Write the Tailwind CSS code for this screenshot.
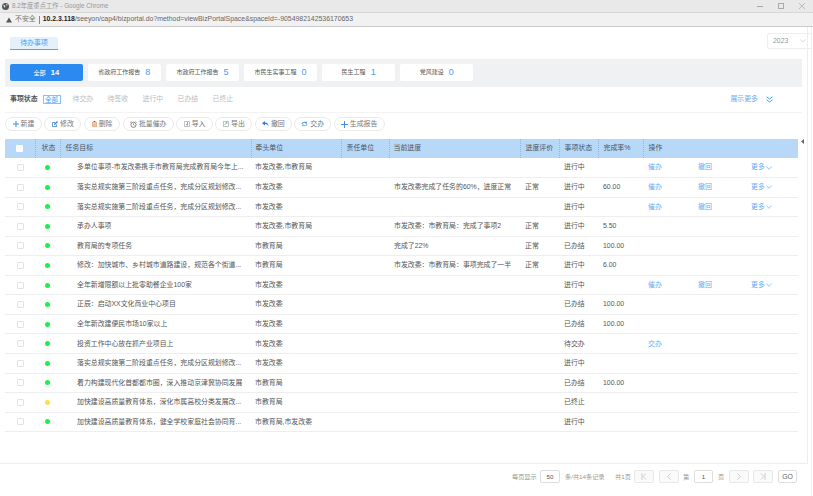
<!DOCTYPE html>
<html lang="zh-CN">

<head>
    <meta charset="UTF-8">
    <meta name="viewport" content="width=device-width, initial-scale=1.0">
    <script src="https://cdn.jsdelivr.net/npm/@tailwindcss/browser@4"></script>
    <title>8.2年度重点工作</title>
</head>

<body class="bg-white overflow-hidden font-['Liberation_Sans','Noto_Sans_CJK_SC',sans-serif]">
    <div class="relative w-[813px] h-[496px] overflow-hidden flex flex-col text-[#555]">
        <!-- Chrome title bar -->
        <div class="h-[13px] bg-[#e9e9ea] flex items-center border-b border-[#d8d8d8]">
            <svg class="ml-[2px] w-[7px] h-[7px]" viewBox="0 0 12 12"><circle cx="6" cy="6" r="6" fill="#555"/><path d="M2 3l3 1 1 2-2 2zM7 1l3 2-2 2z" fill="#ddd"/></svg>
            <span class="ml-[3px] text-[6.3px] text-[#999]">8.2年度重点工作 - Google Chrome</span>
            <div class="ml-auto flex items-center gap-[15px] pr-[8px]">
                <span class="w-[6px] h-px bg-[#aaa]"></span>
                <span class="w-[6px] h-[6px] border border-[#aaa]"></span>
                <svg class="w-[6px] h-[6px]" viewBox="0 0 6 6"><path d="M0 0l6 6M6 0L0 6" stroke="#aaa" stroke-width=".7"/></svg>
            </div>
        </div>
        <!-- Address bar -->
        <div class="h-[14px] bg-[#f1f1f2] flex items-center border-b border-[#c9c9c9] text-[6.9px] whitespace-nowrap">
            <svg class="ml-[6px] w-[6px] h-[6px]" viewBox="0 0 6 6"><path d="M3 .5L6 5.5H0z" fill="#555"/></svg>
            <span class="ml-[3px] text-[#777]">不安全</span>
            <span class="ml-[3px] w-px h-[8px] bg-[#888]"></span>
            <span class="ml-[3px] text-[#222] font-bold">10.2.3.118</span><span class="text-[#666]">/seeyon/cap4/bizportal.do?method=viewBizPortalSpace&amp;spaceId=-9054982142536170653</span>
        </div>

        <!-- Main panel -->
        <div class="w-[808px] h-[437px] border-r border-b border-[#eeeeee]">
            <div class="h-[32px] pt-[6px] flex items-start justify-between">
                <div class="ml-[10px] mt-[4px] w-[48px] h-[13px] bg-[#e3f1fd] border-b border-[#5aa5f2] rounded-t-[2px] text-[6.9px] text-[#4a9cf5] text-center leading-[12px]">待办事项</div>
                <div class="w-[45px] h-[16px] -mr-[5px] border border-[#eeeeee] rounded-[2px] flex items-center justify-between px-[5px] text-[6.9px] text-[#999]">2023
                    <svg class="w-[6px] h-[4px]" viewBox="0 0 6 4"><path d="M.5.5L3 3 5.5.5" fill="none" stroke="#ccc" stroke-width=".7"/></svg>
                </div>
            </div>

            <!-- Category cards -->
            <div class="mx-[5px] h-[28px] bg-[#f0f1f3] flex gap-[5.6px] pl-[5px] pt-[5px]">
                <div class="w-[72.5px] h-[17px] rounded-[2px] bg-[#2a8af0] text-white flex items-center justify-center gap-[5px] text-[6.2px]">全部 <span class="text-[7.5px] font-bold">14</span></div>
                <div class="w-[72.5px] h-[17px] rounded-[2px] bg-white flex items-center justify-center gap-[5px] text-[6px] text-[#555]">省政府工作报告 <span class="text-[9px] text-[#4a9cf5]">8</span></div>
                <div class="w-[72.5px] h-[17px] rounded-[2px] bg-white flex items-center justify-center gap-[5px] text-[6px] text-[#555]">市政府工作报告 <span class="text-[9px] text-[#4a9cf5]">5</span></div>
                <div class="w-[72.5px] h-[17px] rounded-[2px] bg-white flex items-center justify-center gap-[5px] text-[6px] text-[#555]">市民生实事工程 <span class="text-[9px] text-[#4a9cf5]">0</span></div>
                <div class="w-[72.5px] h-[17px] rounded-[2px] bg-white flex items-center justify-center gap-[5px] text-[6px] text-[#555]">民生工程 <span class="text-[9px] text-[#4a9cf5]">1</span></div>
                <div class="w-[72.5px] h-[17px] rounded-[2px] bg-white flex items-center justify-center gap-[5px] text-[6px] text-[#555]">党风建设 <span class="text-[9px] text-[#4a9cf5]">0</span></div>
            </div>

            <!-- Status filter -->
            <div class="mx-[5px] h-[26px] pb-[1px] border-b border-[#f3f3f3] flex items-center text-[6.9px] text-[#bbb]">
                <span class="ml-[5px] font-bold text-[#555]">事项状态</span>
                <span class="ml-[5px] w-[18px] h-[9px] border border-[#8cc0f5] text-[#4a9cf5] text-[6.5px] leading-[7px] text-center">全部</span>
                <span class="ml-[12px] w-[35px]">待交办</span>
                <span class="w-[35px]">待签收</span>
                <span class="w-[35px]">进行中</span>
                <span class="w-[35px]">已办结</span>
                <span>已终止</span>
                <span class="ml-auto text-[#6aabf5]">展示更多</span>
                <svg class="ml-[8px] mr-[29px] w-[7px] h-[7px]" viewBox="0 0 7 7"><path d="M.5.8L3.5 3 6.5.8M.5 3.8L3.5 6l3-2.2" fill="none" stroke="#4a9cf5" stroke-width="1"/></svg>
            </div>

            <!-- Toolbar -->
            <div class="ml-[5px] mt-[4px] flex gap-[2.4px] text-[6.9px] text-[#777]">
                <button class="w-[37px] h-[14px] rounded-full border border-[#eaeaea] flex items-center justify-center gap-[2px]"><svg class="w-[6px] h-[6px]" viewBox="0 0 6 6"><path d="M3 0v6M0 3h6" stroke="#3f8fe6"/></svg>新建</button>
                <button class="w-[37px] h-[14px] rounded-full border border-[#eaeaea] flex items-center justify-center gap-[2px]"><svg class="w-[6px] h-[6px]" viewBox="0 0 6 6"><path d="M0 1h3v1H1v3h3V3.500h1V6H0z" fill="#6f9fe0"/><path d="M2 4l.2-1.300L5 0l1 1-2.800 2.800z" fill="#3f7fdd"/></svg>修改</button>
                <button class="w-[36.500px] h-[14px] rounded-full border border-[#eaeaea] flex items-center justify-center gap-[2px]"><svg class="w-[5px] h-[6px]" viewBox="0 0 5 6"><path d="M0 1h5v5H0z" fill="#e9b48f"/><path d="M1.500 0h2v1h-2zM1 2.500h3M1 4h3" stroke="#f6e3d5" stroke-width=".5"/></svg>删除</button>
                <button class="w-[51px] h-[14px] rounded-full border border-[#eaeaea] flex items-center justify-center gap-[2px]"><svg class="w-[7px] h-[7px]" viewBox="0 0 7 7"><circle cx="3.500" cy="3.800" r="2.600" fill="none" stroke="#555" stroke-width=".7"/><path d="M3.500 2.300v1.600l1 .6M.3 1.500L1.500.4M6.700 1.500L5.500.4" fill="none" stroke="#555" stroke-width=".6"/></svg>批量催办</button>
                <button class="w-[37px] h-[14px] rounded-full border border-[#eaeaea] flex items-center justify-center gap-[2px]"><svg class="w-[6px] h-[6px]" viewBox="0 0 6 6"><path d="M.5.5h5v5h-5z" fill="none" stroke="#999" stroke-width=".6"/><path d="M3.500 1v3M2 3l1.500 1.500" stroke="#4a7fc0" stroke-width=".7" fill="none"/></svg>导入</button>
                <button class="w-[37px] h-[14px] rounded-full border border-[#eaeaea] flex items-center justify-center gap-[2px]"><svg class="w-[6px] h-[6px]" viewBox="0 0 6 6"><path d="M.5.5h5v5h-5z" fill="none" stroke="#999" stroke-width=".6"/><path d="M1.500 4L4 1.500M2.800 1.500H4v1.300" stroke="#4caf7a" stroke-width=".7" fill="none"/></svg>导出</button>
                <button class="w-[37px] h-[14px] rounded-full border border-[#eaeaea] flex items-center justify-center gap-[2px]"><svg class="w-[7px] h-[6px]" viewBox="0 0 7 6"><path d="M3 0L0 2.300 3 4.500V3c2 0 3 .8 3.500 2.500C6.500 3 5.500 1.500 3 1.500z" fill="#2f7fd6"/></svg>撤回</button>
                <button class="w-[37px] h-[14px] rounded-full border border-[#eaeaea] flex items-center justify-center gap-[2px]"><svg class="w-[7px] h-[6px]" viewBox="0 0 7 6"><path d="M.5 3C1 1 3 .3 5 1l1-.5-.3 2.300-2-.5.7-.5C3 1.500 2 2 1.500 3z" fill="#3f8fe6"/><path d="M6.500 3C6 5 4 5.700 2 5l-1 .5.300-2.300 2 .5-.7.500C4 4.500 5 4 5.500 3z" fill="#7fb2e8"/></svg>交办</button>
                <button class="w-[51px] h-[14px] rounded-full border border-[#eaeaea] flex items-center justify-center gap-[2px]"><svg class="w-[7px] h-[7px]" viewBox="0 0 7 7"><path d="M3.500 0v7M0 3.500h7" stroke="#3f8fe6"/></svg>生成报告</button>
            </div>

            <!-- Table -->
            <table class="ml-[5px] mt-[8px] w-[793px] table-fixed border-collapse text-[6.9px] text-left">
                <colgroup>
                    <col class="w-[30px]"><col class="w-[25px]"><col class="w-[191px]"><col class="w-[90px]"><col class="w-[48px]"><col class="w-[131px]"><col class="w-[39px]"><col class="w-[39px]"><col class="w-[45px]"><col class="w-[50px]"><col class="w-[53px]"><col class="w-[52px]">
                </colgroup>
                <thead class="bg-[#b8d8f8] text-[#4a5560]">
                    <tr class="h-[19px]">
                        <th class="font-normal border-r border-dotted border-[#8fb8e0]"><span class="block mx-auto w-[7px] h-[7px] rounded-[1px] bg-white"></span></th>
                        <th class="font-normal pl-[6px] border-r border-dotted border-[#8fb8e0]">状态</th>
                        <th class="font-normal pl-[5px] border-r border-dotted border-[#8fb8e0]">任务目标</th>
                        <th class="font-normal pl-[4px] border-r border-dotted border-[#8fb8e0]">牵头单位</th>
                        <th class="font-normal pl-[5px] border-r border-dotted border-[#8fb8e0]">责任单位</th>
                        <th class="font-normal pl-[4px] border-r border-dotted border-[#8fb8e0]">当前进度</th>
                        <th class="font-normal pl-[5px] border-r border-dotted border-[#8fb8e0]">进度评价</th>
                        <th class="font-normal pl-[5px] border-r border-dotted border-[#8fb8e0]">事项状态</th>
                        <th class="font-normal pl-[5px] border-r border-dotted border-[#8fb8e0]">完成率%</th>
                        <th class="font-normal pl-[5px]" colspan="3">操作</th>
                    </tr>
                </thead>
                <tbody id="rows"></tbody>
            </table>
        </div>

        <!-- Collapse arrow, sits over the table's right edge -->
        <svg class="absolute left-[801px] top-[139px] w-[3px] h-[5px]" viewBox="0 0 3 5"><path d="M3 0v5L0 2.500z" fill="#666"/></svg>
        <!-- Outer page scroll edge -->
        <span class="absolute left-[811px] top-[27px] bottom-0 w-px bg-[#eeeeee]"></span>

        <!-- Pagination -->
        <div class="ml-[512px] mt-[6px] flex items-center h-[13px] text-[6.2px] text-[#999] whitespace-nowrap">
            <span class="w-[28px]">每页显示</span>
            <span class="w-[20px] h-[13px] border border-[#ddd] rounded-[2px] text-[#555] text-center leading-[11px]">50</span>
            <span class="ml-[5px] w-[50px]">条/共14条记录</span>
            <span class="w-[19px]">共1页</span>
            <span class="w-[20px] h-[13px] border border-[#e8e8e8] rounded-[2px] bg-[#fafafa] flex items-center justify-center"><svg class="w-[6px] h-[7px]" viewBox="0 0 6 7"><path d="M1 0v7M5 .5L2 3.500l3 3" fill="none" stroke="#bbb" stroke-width=".7"/></svg></span>
            <span class="ml-[5px] w-[20px] h-[13px] border border-[#e8e8e8] rounded-[2px] bg-[#fafafa] flex items-center justify-center"><svg class="w-[4px] h-[7px]" viewBox="0 0 4 7"><path d="M3.500.5L.5 3.500l3 3" fill="none" stroke="#bbb" stroke-width=".7"/></svg></span>
            <span class="ml-[4px] w-[11px]">第</span>
            <span class="w-[19px] h-[13px] border border-[#ddd] rounded-[2px] text-[#555] text-center leading-[11px]">1</span>
            <span class="ml-[5px] w-[11px]">页</span>
            <span class="w-[20px] h-[13px] border border-[#e8e8e8] rounded-[2px] bg-[#fafafa] flex items-center justify-center"><svg class="w-[4px] h-[7px]" viewBox="0 0 4 7"><path d="M.5.5l3 3-3 3" fill="none" stroke="#bbb" stroke-width=".7"/></svg></span>
            <span class="ml-[4px] w-[20px] h-[13px] border border-[#e8e8e8] rounded-[2px] bg-[#fafafa] flex items-center justify-center"><svg class="w-[6px] h-[7px]" viewBox="0 0 6 7"><path d="M5 0v7M1 .5l3 3-3 3" fill="none" stroke="#bbb" stroke-width=".7"/></svg></span>
            <span class="ml-[5px] w-[19px] h-[13px] border border-[#ddd] rounded-[2px] text-[#666] text-[6.9px] text-center leading-[11px]">GO</span>
        </div>
    </div>

    <script>
        // Table rows: goal, lead, progress, rating, status, rate, actions, dot color
        const tasks = [
            ['多单位事项-市发改委携手市教育局完成教育局今年上...', '市发改委,市教育局', '', '', '进行中', '', 'full'],
            ['落实总规实施第三阶段重点任务，完成分区规划修改...', '市发改委', '市发改委完成了任务的60%，进度正常', '正常', '进行中', '60.00', 'full'],
            ['落实总规实施第二阶段重点任务，完成分区规划修改...', '市发改委', '', '', '进行中', '', 'full'],
            ['承办人事项', '市发改委,市教育局', '市发改委：市教育局：完成了事项2', '正常', '进行中', '5.50', ''],
            ['教育局的专项任务', '市教育局', '完成了22%', '正常', '已办结', '100.00', ''],
            ['修改：加快城市、乡村城市道路建设，规范各个街道...', '市教育局', '市发改委：市教育局：事项完成了一半', '正常', '进行中', '6.00', ''],
            ['全年新增限额以上批零助餐企业100家', '市发改委', '', '', '进行中', '', 'full'],
            ['正辰：启动XX文化商业中心项目', '市发改委', '', '', '已办结', '100.00', ''],
            ['全年新改建便民市场10家以上', '市发改委', '', '', '已办结', '100.00', ''],
            ['投资工作中心放在抓产业项目上', '市发改委', '', '', '待交办', '', 'assign'],
            ['落实总规实施第二阶段重点任务，完成分区规划修改...', '市发改委', '', '', '进行中', '', ''],
            ['着力构建现代化首都都市圈，深入推动京津冀协同发展', '市教育局', '', '', '已办结', '100.00', ''],
            ['加快建设高质量教育体系，深化市属高校分类发展改...', '市教育局', '', '', '已终止', '', '', true],
            ['加快建设高质量教育体系，健全学校家庭社会协同育...', '市教育局,市发改委', '', '', '进行中', '', '']
        ];

        const link = 'pl-[5px] text-[#6aabf5]';
        document.getElementById('rows').innerHTML = tasks.map(t => {
            const dot = t[7] ? 'bg-[#ffe040]' : 'bg-[#1df04a]';
            let actions = `<td class="${link}"></td><td class="${link}"></td><td class="${link}"></td>`;
            if (t[6] === 'full') {
                actions = `<td class="${link}">催办</td><td class="${link}">撤回</td><td class="${link}"><span class="flex items-center gap-[1px]">更多<svg class="w-[6px] h-[4px]" viewBox="0 0 6 4"><path d="M.3.5L3 3.300 5.700.5" fill="none" stroke="#6aabf5" stroke-width=".7"/></svg></span></td>`;
            } else if (t[6] === 'assign') {
                actions = `<td class="${link}">交办</td><td class="${link}"></td><td class="${link}"></td>`;
            }
            return `<tr class="h-[19.55px] border-b border-[#eeeeee]">
                <td><span class="block mx-auto w-[7px] h-[7px] rounded-[1px] border border-[#e2e2e2]"></span></td>
                <td><span class="block mx-auto w-[5px] h-[5px] rounded-full ${dot}"></span></td>
                <td class="pl-[17px] whitespace-nowrap overflow-hidden">${t[0]}</td>
                <td class="pl-[4px]">${t[1]}</td>
                <td></td>
                <td class="pl-[5px] whitespace-nowrap overflow-hidden">${t[2]}</td>
                <td class="pl-[5px]">${t[3]}</td>
                <td class="pl-[5px]">${t[4]}</td>
                <td class="pl-[5px]">${t[5]}</td>
                ${actions}
            </tr>`;
        }).join('');
    </script>
</body>

</html>
